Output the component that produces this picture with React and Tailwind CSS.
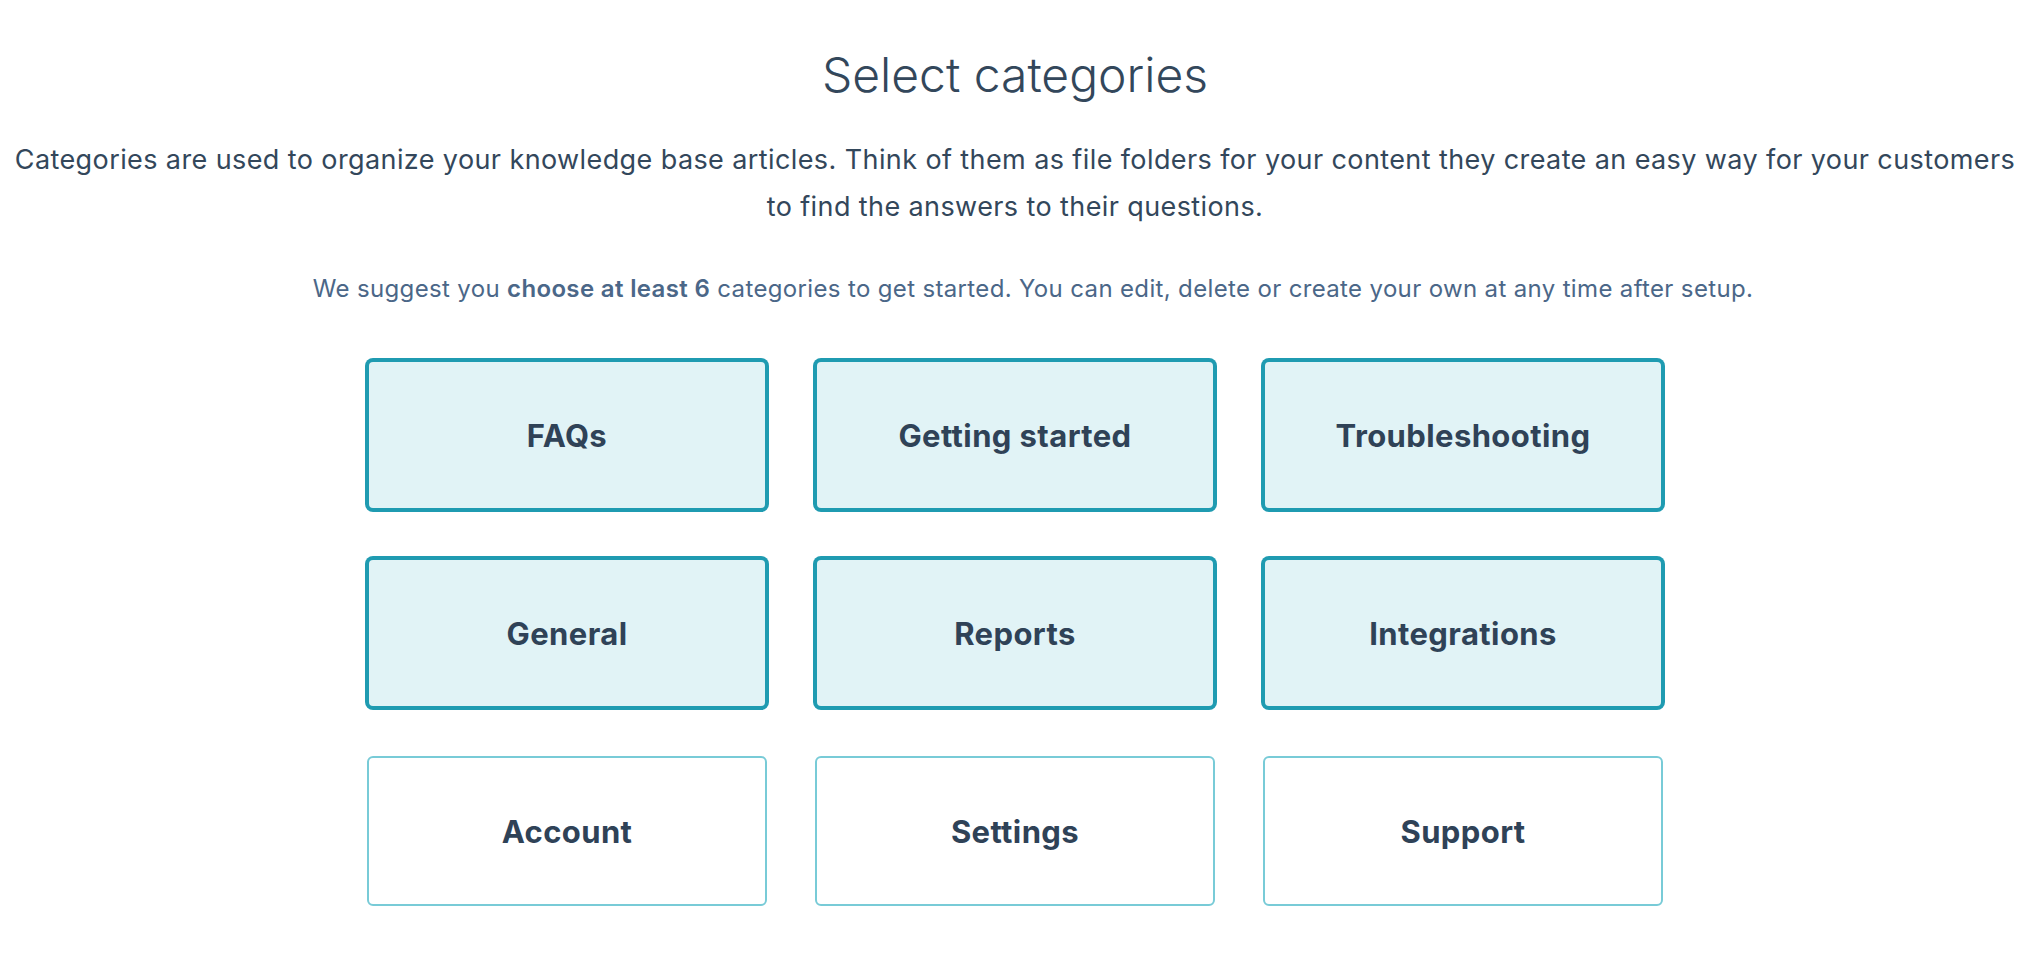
import React from "react";

const categories = [
  { label: "FAQs", selected: true },
  { label: "Getting started", selected: true },
  { label: "Troubleshooting", selected: true },
  { label: "General", selected: true },
  { label: "Reports", selected: true },
  { label: "Integrations", selected: true },
  { label: "Account", selected: false },
  { label: "Settings", selected: false },
  { label: "Support", selected: false },
];

function CategoryCard({ label, selected }) {
  return (
    <button
      type="button"
      className={
        selected
          ? "flex h-[150px] w-[400px] items-center justify-center rounded-[6px] border-2 border-[#1f9bb1] bg-[#e1f3f6] shadow-[0_0_0_2px_#1f9bb1]"
          : "flex h-[150px] w-[400px] items-center justify-center rounded-[6px] border-2 border-[#78cbd7] bg-white"
      }
    >
      <span className="text-[31px] font-bold leading-none tracking-[0.4px] text-[#2f4257]">{label}</span>
    </button>
  );
}

export default function App() {
  return (
    <div className="min-h-screen bg-white pr-2 font-['Inter',_'Noto_Sans',_sans-serif] text-[#33475b]">
      <div className="flex flex-col items-center pt-[46px]">
        <h1 className="text-[48px] font-light leading-[58px] text-[#33475b]">Select categories</h1>
        <p className="mt-[32px] whitespace-nowrap text-center text-[27px] font-normal leading-[47px] tracking-[0.4px] text-[#33475b]">
          Categories are used to organize your knowledge base articles. Think of them as file folders for your content they create an easy way for your customers
          <br />
          to find the answers to their questions.
        </p>
        <p className="ml-[36px] mt-[43px] whitespace-nowrap text-center text-[24px] leading-[32px] tracking-[0.35px] text-[#4b6788]">
          We suggest you <strong className="font-semibold">choose at least 6</strong> categories to get started. You can edit, delete or create your own at any time after setup.
        </p>
        <div className="mt-[55px] grid grid-cols-[repeat(3,400px)] gap-[48px]">
          {categories.map((c) => (
            <CategoryCard key={c.label} label={c.label} selected={c.selected} />
          ))}
        </div>
      </div>
    </div>
  );
}
